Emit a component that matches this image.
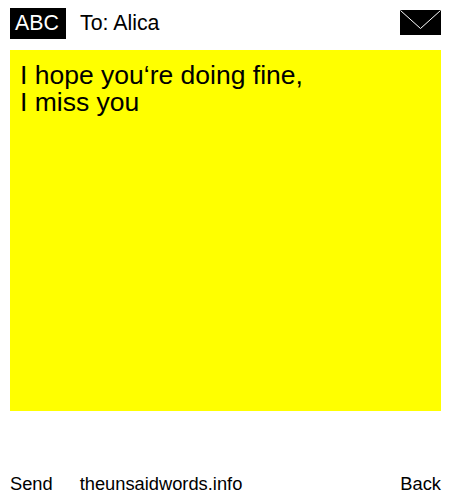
<div class="page">
  <header class="top">
    <div class="abc">ABC</div>
    <div class="to">To: Alica</div>
    <svg class="mail" width="41" height="25" viewBox="0 0 41 25" aria-hidden="true">
      <rect width="41" height="25" fill="#000" />
      <path d="M0.5 0.5 L20.5 18.5 L40.5 0.5" fill="none" stroke="#fff" stroke-width="1" />
    </svg>
  </header>
  <main class="note">I hope you‘re doing fine,<br />I miss you</main>
  <footer class="bottom">
    <span class="send">Send</span>
    <span class="site">theunsaidwords.info</span>
    <span class="back">Back</span>
  </footer>
</div>

<style>
  :global(body) {
    margin: 0;
    background: #fff;
  }
  .page {
    width: 431px;
    height: 500px;
    padding: 0 9px 0 10px;
    display: flex;
    flex-direction: column;
    font-family: "Liberation Sans", Arial, sans-serif;
    color: #000;
  }
  .top {
    height: 31px;
    margin-top: 8px;
    display: flex;
    align-items: center;
  }
  .abc {
    width: 54px;
    height: 31px;
    padding-right: 2px;
    background: #000;
    color: #fff;
    font-size: 21.33px;
    line-height: 31px;
    text-align: center;
  }
  .to {
    margin-left: 14px;
    font-size: 21.33px;
    flex: 1;
  }
  .mail {
    display: block;
    margin-top: -2px;
  }
  .note {
    margin-top: 11px;
    padding: 12px 10px 9px;
    background: #ff0;
    font-size: 26.5px;
    line-height: 27px;
    height: 340px;
  }
  .bottom {
    margin-top: auto;
    height: 33px;
    display: flex;
    font-size: 18.3px;
    line-height: 33px;
  }
  .site {
    margin-left: 27px;
    flex: 1;
  }
</style>
